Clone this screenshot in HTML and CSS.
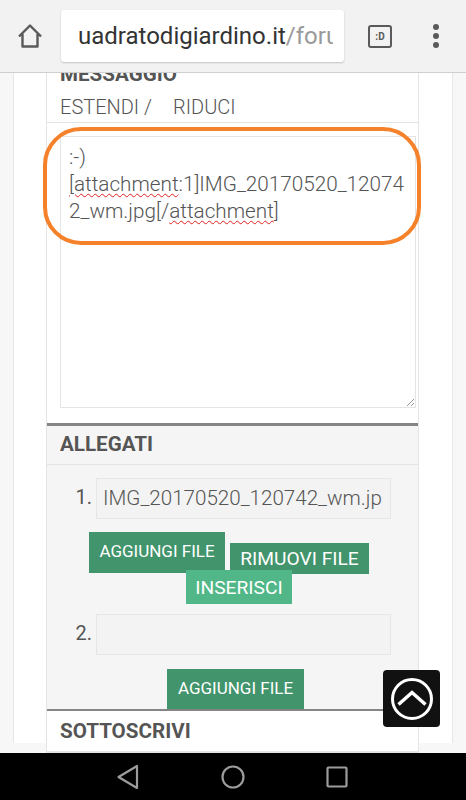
FILE: index.html
```html
<!DOCTYPE html>
<html lang="it">
<head>
  <meta charset="UTF-8" />
  <title>Messaggio</title>
  <link rel="stylesheet" href="styles.css">
</head>
<body>
  <div class="screen">
    <header class="toolbar">
      <svg class="home-icon" width="26" height="26" viewBox="0 0 26 26">
        <path d="M2 13.500 13 2.500l11 11M5.500 11v12.500h15V11" fill="none" stroke="#5a5a5a" stroke-width="2.400" stroke-linejoin="round"/>
      </svg>
      <div class="url-box">
        <div class="url-text">uadratodigiardino.it<span class="url-path">/foru</span></div>
      </div>
      <div class="tab-icon">:D</div>
      <div class="menu-dots"><i></i><i></i><i></i></div>
    </header>

    <main class="page">
      <div class="wrapper">
        <form class="panel">
          <section class="message">
            <h2 class="clipped-title">MESSAGGIO</h2>
            <div class="resize-links"><span>ESTENDI /</span><span>RIDUCI</span></div>
            <div class="textbox-wrap">
              <div class="textbox">:-)<br><span class="typo">[attachment</span>:1]IMG_20170520_12074<br>2_wm.jpg[/<span class="typo">attachment</span>]
                <svg class="grip" width="8" height="8" viewBox="0 0 8 8">
                  <path d="M1 8l7-7M5 8l3-3" stroke="#999" stroke-width="1"/>
                </svg>
              </div>
              <div class="highlight"></div>
            </div>
          </section>

          <section class="attachments">
            <h2 class="section-head">ALLEGATI</h2>
            <div class="file-row">
              <span class="file-num">1.</span>
              <div class="file-input"><div class="file-name">IMG_20170520_120742_wm.jpg</div></div>
            </div>
            <div class="file-actions">
              <button type="button" class="btn btn-add">AGGIUNGI FILE</button>
              <button type="button" class="btn btn-remove">RIMUOVI FILE</button>
              <button type="button" class="btn btn-insert">INSERISCI</button>
            </div>
            <div class="file-row file-row-2">
              <span class="file-num">2.</span>
              <div class="file-input"></div>
            </div>
            <div class="file-actions file-actions-2">
              <button type="button" class="btn btn-add">AGGIUNGI FILE</button>
            </div>
          </section>

          <section class="subscribe">
            <h2 class="section-head">SOTTOSCRIVI</h2>
          </section>
        </form>
      </div>
      <a class="back-top" href="#">
        <svg width="44" height="44" viewBox="0 0 44 44">
          <circle cx="22" cy="22" r="19.500" fill="none" stroke="#fff" stroke-width="3"/>
          <path d="M8.500 27.500 22 15.500 35.500 27.500" fill="none" stroke="#fff" stroke-width="3.500"/>
        </svg>
      </a>
    </main>

    <nav class="android-nav">
      <svg width="24" height="26" viewBox="0 0 24 26">
        <path d="M21 2v22L2.500 13z" fill="none" stroke="#9c9c9c" stroke-width="2.200" stroke-linejoin="round"/>
      </svg>
      <svg width="24" height="24" viewBox="0 0 24 24">
        <circle cx="12" cy="12" r="10.500" fill="none" stroke="#9c9c9c" stroke-width="2.200"/>
      </svg>
      <svg width="22" height="22" viewBox="0 0 22 22">
        <rect x="1.500" y="1.500" width="19" height="19" rx="1" fill="none" stroke="#9c9c9c" stroke-width="2.200"/>
      </svg>
    </nav>
  </div>
</body>
</html>
```

FILE: styles.css
```css
html, body {
  margin: 0;
  height: 800px;
  overflow: hidden;
}
body {
  font-family: Roboto, 'Noto Sans', sans-serif;
  color: #555;
}
.screen {
  display: flex;
  flex-direction: column;
  height: 800px;
}

/* browser bar */
.toolbar {
  position: relative;
  z-index: 2;
  flex: 0 0 73px;
  box-sizing: border-box;
  display: flex;
  align-items: center;
  padding: 0 0 0 17px;
  background-color: #f2f2f2;
  border-bottom: 1px solid #cfcfcf;
}
.home-icon {
  flex: none;
}
.url-box {
  flex: none;
  box-sizing: border-box;
  width: 283px;
  height: 52px;
  margin-left: 18px;
  padding: 0 11px 0 17px;
  display: flex;
  align-items: center;
  background-color: #fff;
  border-radius: 3px;
  box-shadow: 0 1px 2px rgba(0, 0, 0, 0.2);
}
.url-text {
  overflow: hidden;
  white-space: nowrap;
  font-size: 24px;
  color: #333;
}
.url-path {
  color: #999;
}
.tab-icon {
  flex: none;
  box-sizing: border-box;
  width: 24px;
  height: 23px;
  margin-left: 24px;
  border: 2px solid #5a5a5a;
  border-radius: 3px;
  font-size: 10px;
  font-weight: 700;
  line-height: 19px;
  text-align: center;
  color: #5a5a5a;
}
.menu-dots {
  flex: none;
  display: flex;
  flex-direction: column;
  gap: 3px;
  margin-left: 41px;
}
.menu-dots i {
  width: 6px;
  height: 6px;
  border-radius: 50%;
  background-color: #5a5a5a;
}

/* page */
.page {
  position: relative;
  flex: 1;
  overflow: hidden;
  background-color: #f7f7f7;
}
.wrapper {
  box-sizing: border-box;
  width: 440px;
  height: 100%;
  margin-left: 13px;
  padding: 0 32px;
  background-color: #fff;
  border-left: 1px solid #e6e6e6;
  border-right: 1px solid #e6e6e6;
}
.panel {
  box-sizing: border-box;
  width: 373px;
  margin-top: -10px;
  border-left: 1px solid #e4e4e4;
  border-right: 1px solid #e4e4e4;
  border-bottom: 2px solid #e4e4e4;
}
.clipped-title {
  margin: 0;
  padding-left: 13px;
  font-size: 20.600px;
  font-weight: 700;
  line-height: 22px;
}
.resize-links {
  display: flex;
  gap: 21px;
  height: 30px;
  margin-top: 7px;
  padding-left: 13px;
  font-size: 20px;
  font-weight: 300;
  line-height: 31px;
  border-bottom: 1px solid #e4e4e4;
}
.textbox-wrap {
  position: relative;
  padding: 13px 2px 15px 13px;
}
.textbox {
  position: relative;
  box-sizing: border-box;
  height: 272px;
  padding: 7px 8px;
  border: 1px solid #e4e4e4;
  font-size: 20.700px;
  font-weight: 300;
  line-height: 27px;
  color: #555;
  white-space: nowrap;
}
.typo {
  text-decoration: underline wavy #e02020 1px;
  text-underline-offset: 2px;
}
.grip {
  position: absolute;
  right: 1px;
  bottom: 1px;
}
.highlight {
  position: absolute;
  left: -4px;
  top: 4px;
  width: 378px;
  height: 118px;
  box-sizing: border-box;
  border: 4px solid #f5822a;
  border-radius: 38px;
}

/* allegati */
.attachments {
  background-color: #f5f5f5;
  border-top: 3px solid #858585;
}
.section-head {
  margin: 0;
  padding: 0 0 2px 13px;
  font-size: 20.600px;
  font-weight: 700;
  line-height: 36px;
  border-bottom: 1px solid #e4e4e4;
}
.file-row {
  display: flex;
  align-items: center;
  gap: 4px;
  margin-top: 13px;
  padding-left: 26px;
}
.file-row-2 {
  margin-top: 10px;
}
.file-num {
  font-size: 20px;
  width: 19px;
  text-align: right;
  margin-bottom: 3px;
}
.file-input {
  box-sizing: border-box;
  width: 295px;
  height: 41px;
  padding: 0 8px 0 6px;
  background-color: #f3f3f3;
  border: 1px solid #e6e6e6;
}
.file-name {
  overflow: hidden;
  white-space: nowrap;
  font-size: 20.600px;
  font-weight: 300;
  line-height: 39px;
  color: #555;
}
.file-actions {
  display: flex;
  flex-wrap: wrap;
  justify-content: center;
  align-items: flex-end;
  width: 290px;
  margin: 13px 0 0 37px;
  column-gap: 5px;
}
.file-actions-2 {
  width: 137px;
  margin: 14px 0 0 120px;
}
.btn {
  box-sizing: border-box;
  padding: 0;
  border: 0;
  border-radius: 0;
  color: #fff;
  font-family: inherit;
  font-weight: 400;
}
.btn-add {
  width: 136px;
  height: 41px;
  padding-bottom: 4px;
  font-size: 17px;
  background-color: #41946b;
}
.file-actions-2 .btn-add {
  width: 137px;
  height: 40px;
  padding-bottom: 2px;
}
.btn-remove {
  width: 139px;
  height: 31px;
  font-size: 19.200px;
  background-color: #41946b;
  margin-bottom: -1px;
}
.btn-insert {
  width: 106px;
  height: 34px;
  margin-top: -3px;
  margin-left: 20px;
  font-size: 19.200px;
  background-color: #52b788;
}

/* sottoscrivi */
.subscribe {
  background-color: #fff;
  border-top: 2px solid #858585;
}
.subscribe .section-head {
  padding: 2px 0 2px 13px;
}

.back-top {
  position: absolute;
  left: 383px;
  top: 597px;
  width: 57px;
  height: 57px;
  display: flex;
  align-items: center;
  justify-content: center;
  background-color: #111;
  border-radius: 4px;
}

/* android buttons */
.android-nav {
  flex: 0 0 47px;
  display: flex;
  align-items: center;
  background-color: #000;
  padding-left: 116px;
  gap: 81px;
}
```
